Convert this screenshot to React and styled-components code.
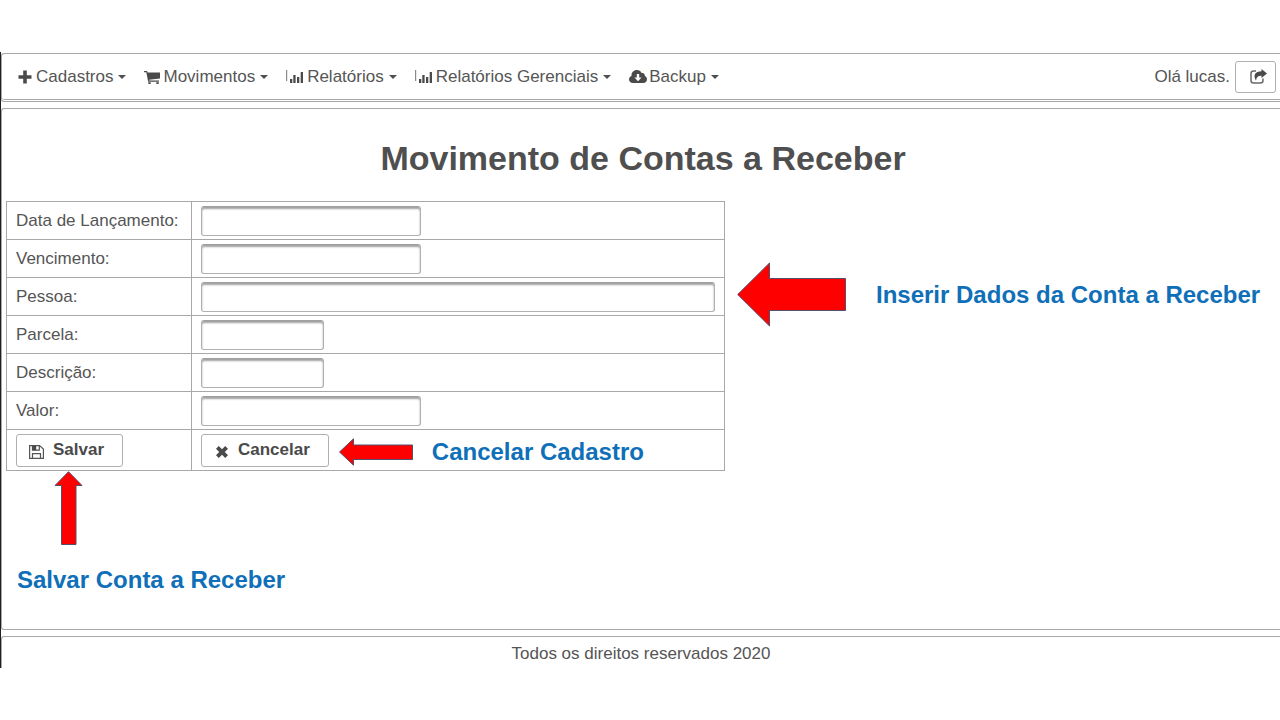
import React from "react";
import styled, { createGlobalStyle } from "styled-components";

const GlobalStyle = createGlobalStyle`
  * { box-sizing: border-box; }
  body {
    margin: 0;
    background: #ffffff;
    color: #555555;
    font-family: "Liberation Sans", Arial, sans-serif;
    font-size: 17px;
    line-height: 20px;
    overflow-x: hidden;
  }
`;

const Page = styled.div`
  margin: 52px 0;
  padding-top: 1px;
  border-left: 1px solid #241c24;
  display: flex;
  flex-direction: column;
  gap: 6px;
`;

const panelEdge = "1px solid #a8a8a8";

const Header = styled.header`
  border: ${panelEdge};
  border-right: 0;
  border-radius: 3px 0 0 3px;
  padding-bottom: 1px;
`;

const MenuBar = styled.div`
  display: flex;
  align-items: center;
  justify-content: space-between;
  height: 46px;
  padding: 0 4px 0 16px;
  border-bottom: ${panelEdge};
  border-radius: 0 0 0 3px;
`;

const Menu = styled.nav`
  display: flex;
  align-items: center;
  gap: 18px;
`;

const MenuLink = styled.a`
  display: flex;
  align-items: center;
  color: inherit;
  text-decoration: none;
`;

const Icon = styled.svg`
  display: block;
  flex: none;
  width: ${(p) => p.$w}px;
  height: ${(p) => p.$h}px;
  fill: #4a4a4a;
`;

const MenuIcon = styled(Icon)`
  margin-right: ${(p) => p.$gap || 2}px;
`;

const Caret = styled.span`
  margin-left: 5px;
  border: 4px solid transparent;
  border-top-color: #4f4f4f;
  border-bottom: 0;
`;

const User = styled.div`
  display: flex;
  align-items: center;
  gap: 5px;
`;

const buttonSkin = `
  border: 1px solid #b0b0b0;
  border-radius: 3px;
  background: #ffffff;
  color: #4a4a4a;
  font-family: inherit;
  cursor: pointer;
`;

const LogoutButton = styled.button`
  ${buttonSkin}
  display: flex;
  align-items: center;
  justify-content: center;
  width: 41px;
  height: 32px;
  padding: 0 0 0 6px;
`;

const Content = styled.main`
  border: ${panelEdge};
  border-right: 0;
  border-radius: 3px 0 0 3px;
  padding: 29px 0 35px 4px;
`;

const Title = styled.h1`
  margin: 0 0 23px;
  color: #4f4f4f;
  font-size: 34px;
  line-height: 40px;
  text-align: center;
`;

const FormRow = styled.div`
  display: flex;
  align-items: flex-start;
  gap: 12px;
`;

const FormTable = styled.table`
  width: 719px;
  flex: none;
  border-collapse: collapse;
  table-layout: fixed;
`;

const Row = styled.tr`
  height: ${(p) => (p.$actions ? 41 : 38)}px;
`;

const cell = `
  padding: 0 9px;
  border: 1px solid #a8a8a8;
  text-align: left;
  font-weight: normal;
  white-space: nowrap;
`;

const LabelCell = styled.th`
  ${cell}
  width: 185px;
`;

const FieldCell = styled.td`
  ${cell}
`;

const widths = { small: "123px", medium: "220px", full: "100%" };

const TextField = styled.input`
  display: block;
  width: ${(p) => widths[p.$size]};
  height: 30px;
  padding: 0 6px;
  border: 1px solid #b0b0b0;
  border-top-color: #a0a0a0;
  border-radius: 3px;
  background: #ffffff;
  box-shadow: inset 0 2px 2px #a0a0a0;
  font: inherit;
  color: inherit;
`;

const ActionGroup = styled.div`
  display: flex;
  align-items: center;
`;

const ActionButton = styled.button`
  ${buttonSkin}
  display: flex;
  align-items: center;
  gap: 9px;
  height: 33px;
  padding: 0 18px 0 12px;
  font-size: 17px;
  font-weight: bold;
`;

const ButtonIcon = styled(Icon)`
  margin-top: 4px;
`;

const Note = styled.p`
  margin: 0;
  color: #0f6fb8;
  font-size: 24px;
  line-height: 28px;
  font-weight: bold;
  white-space: nowrap;
`;

const Callout = styled.div`
  display: flex;
  align-items: center;
  gap: ${(p) => p.$gap}px;
`;

const SideCallout = styled(Callout)`
  padding-top: 61px;
`;

const InlineCallout = styled(Callout)`
  padding: 4px 0 0 10px;
`;

const BelowCallout = styled.div`
  display: flex;
  flex-direction: column;
  align-items: flex-start;
  gap: 21px;
  padding-left: 11px;
`;

const Arrow = styled.svg`
  display: block;
  flex: none;
  width: ${(p) => p.$w}px;
  height: ${(p) => p.$h}px;
  fill: #ff0000;
  stroke: #51506e;
  stroke-width: 1;
`;

const UpArrow = styled(Arrow)`
  margin-left: 37px;
`;

const Footer = styled.footer`
  height: 32px;
  padding-top: 7px;
  border: ${panelEdge};
  border-right: 0;
  border-bottom: 0;
  border-radius: 3px 0 0 0;
  text-align: center;
`;

const PlusIcon = () => (
  <MenuIcon $w={14} $h={14} $gap={4} viewBox="0 0 14 14" aria-hidden="true">
    <path d="M5.200 .5h3.600v4.700H13.500v3.600H8.800v4.700H5.200V8.800H.5V5.200h4.700z" />
  </MenuIcon>
);

const CartIcon = () => (
  <MenuIcon $w={16} $h={14} $gap={3} viewBox="0 0 16 14" aria-hidden="true">
    <path d="M0 1h3l.7 1.500H16V8.500L5.200 9.800l.2.800H15v1.200H4.200L2.300 2.200H0zM4.300 12.200h2.400V14H4.300zM12.300 12.200h2.400V14h-2.400z" />
  </MenuIcon>
);

const ChartIcon = () => (
  <MenuIcon $w={18} $h={13} $gap={3} viewBox="0 0 18 13" aria-hidden="true">
    <path fill="#8a8a8a" d="M0 0h1.200v11H0z" />
    <path d="M4 9h2.300v4H4zM7.300 5h2.300v8H7.300zM11 7h2.300v6H11zM14.700 2H17v11h-2.300z" />
  </MenuIcon>
);

const CloudIcon = () => (
  <MenuIcon $w={18} $h={13} viewBox="0 0 18 13" aria-hidden="true">
    <path d="M4 13C1.600 13 0 11.400 0 9.300c0-1.700 1-2.900 2.500-3.400C2.300 2.500 4.600 0 7.800 0c2.300 0 4 1.200 4.800 3 2-.5 3.600 1 3.200 3.100C17.200 6.600 18 7.900 18 9.300c0 2.100-1.600 3.700-3.800 3.700z" />
    <path fill="#fff" d="M7.800 4h2.400v3.500h2.300L9 11.200 5.500 7.500h2.300z" />
  </MenuIcon>
);

const ShareIcon = () => (
  <Icon $w={17} $h={15} viewBox="0 0 17 15" aria-hidden="true">
    <path
      fill="none"
      stroke="#6a6a6a"
      strokeWidth="1.500"
      d="M6 2H3.500C2 2 1 3 1 4.500v7C1 13 2 14 3.500 14h7c1.500 0 2.500-1 2.500-2.500V9.500"
    />
    <path d="M11.500 0 17 4.500 11.500 9V6.800C8.500 6.600 6.500 7.800 6 11.500 2.500 6 5.500 2.200 11.500 2.200z" />
  </Icon>
);

const SaveIcon = () => (
  <ButtonIcon $w={15} $h={14} viewBox="0 0 15 14" aria-hidden="true">
    <path
      fill="none"
      stroke="#555"
      strokeWidth="1.200"
      d="M.6.6h10L14.400 4v9.400H.6zM3.500 13.400V8.600h8v4.800M3.500.6v4.600h6.800V.6"
    />
    <path d="M3.500.6h3.700v4.600H3.500z" />
  </ButtonIcon>
);

const CloseIcon = () => (
  <ButtonIcon $w={15} $h={12} viewBox="-2 0 15 12" aria-hidden="true">
    <path d="M2.800 0 6 3.200 9.200 0 12 2.800 8.800 6 12 9.200 9.200 12 6 8.800 2.800 12 0 9.200 3.200 6 0 2.800z" />
  </ButtonIcon>
);

const menuItems = [
  { label: "Cadastros", Glyph: PlusIcon },
  { label: "Movimentos", Glyph: CartIcon },
  { label: "Relatórios", Glyph: ChartIcon },
  { label: "Relatórios Gerenciais", Glyph: ChartIcon },
  { label: "Backup", Glyph: CloudIcon },
];

const fields = [
  { id: "lancamento", label: "Data de Lançamento:", size: "medium" },
  { id: "vencimento", label: "Vencimento:", size: "medium" },
  { id: "pessoa", label: "Pessoa:", size: "full" },
  { id: "parcela", label: "Parcela:", size: "small" },
  { id: "descricao", label: "Descrição:", size: "small" },
  { id: "valor", label: "Valor:", size: "medium" },
];

export default function App() {
  return (
    <>
      <GlobalStyle />
      <Page>
        <Header>
          <MenuBar>
            <Menu>
              {menuItems.map(({ label, Glyph }) => (
                <MenuLink href="#" key={label}>
                  <Glyph />
                  {label}
                  <Caret />
                </MenuLink>
              ))}
            </Menu>
            <User>
              <span>Olá lucas.</span>
              <LogoutButton type="button" aria-label="Sair">
                <ShareIcon />
              </LogoutButton>
            </User>
          </MenuBar>
        </Header>

        <Content>
          <Title>Movimento de Contas a Receber</Title>
          <FormRow>
            <FormTable>
              <tbody>
                {fields.map(({ id, label, size }) => (
                  <Row key={id}>
                    <LabelCell scope="row">
                      <label htmlFor={id}>{label}</label>
                    </LabelCell>
                    <FieldCell>
                      <TextField id={id} type="text" $size={size} />
                    </FieldCell>
                  </Row>
                ))}
                <Row $actions>
                  <FieldCell>
                    <ActionButton type="button">
                      <SaveIcon />
                      Salvar
                    </ActionButton>
                  </FieldCell>
                  <FieldCell>
                    <ActionGroup>
                      <ActionButton type="button">
                        <CloseIcon />
                        Cancelar
                      </ActionButton>
                      <InlineCallout $gap={19}>
                        <Arrow $w={74} $h={28} viewBox="0 0 74 28" aria-hidden="true">
                          <path d="M.5 14 14.500.8V7H73.500V21.500H14.500V27.200z" />
                        </Arrow>
                        <Note>Cancelar Cadastro</Note>
                      </InlineCallout>
                    </ActionGroup>
                  </FieldCell>
                </Row>
              </tbody>
            </FormTable>
            <SideCallout $gap={30}>
              <Arrow $w={109} $h={65} viewBox="0 0 109 65" aria-hidden="true">
                <path d="M.7 32.500 32.500 1V16.500H108.500V48.500H32.500V64z" />
              </Arrow>
              <Note>Inserir Dados da Conta a Receber</Note>
            </SideCallout>
          </FormRow>
          <BelowCallout>
            <UpArrow $w={29} $h={74} viewBox="0 0 29 74" aria-hidden="true">
              <path d="M14.500.7 28 14.500H22V73.500H7.500V14.500H1z" />
            </UpArrow>
            <Note>Salvar Conta a Receber</Note>
          </BelowCallout>
        </Content>

        <Footer>Todos os direitos reservados 2020</Footer>
      </Page>
    </>
  );
}
